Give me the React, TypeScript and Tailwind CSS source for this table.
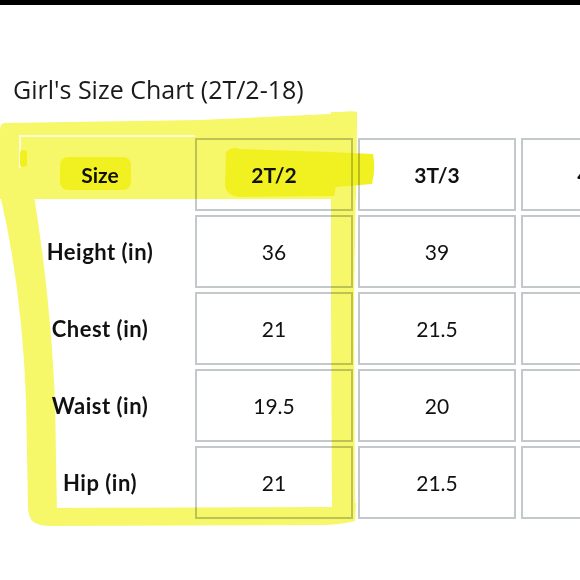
const columns = [
  { size: '2T/2', height: '36', chest: '21', waist: '19.5', hip: '21' },
  { size: '3T/3', height: '39', chest: '21.5', waist: '20', hip: '21.5' },
  { size: '4T/4', height: '41', chest: '22', waist: '20.5', hip: '22.5' },
];

const rows: { label: string; key: 'height' | 'chest' | 'waist' | 'hip' }[] = [
  { label: 'Height (in)', key: 'height' },
  { label: 'Chest (in)', key: 'chest' },
  { label: 'Waist (in)', key: 'waist' },
  { label: 'Hip (in)', key: 'hip' },
];

function Cell({ children, bold }: { children: React.ReactNode; bold?: boolean }) {
  return (
    <div
      className={`h-[73px] border-2 border-[#c3c9cb] flex items-center justify-center text-[21px] text-[#111] ${
        bold ? 'font-bold' : 'font-normal'
      }`}
    >
      {children}
    </div>
  );
}

function Label({ children, wide }: { children: React.ReactNode; wide?: boolean }) {
  return (
    <div
      className={`h-[73px] flex items-center justify-center font-bold text-[#111] ${
        wide ? 'text-[22px] tracking-[0.5px]' : 'text-[21px]'
      }`}
    >
      {children}
    </div>
  );
}

// highlighter marks drawn over the chart
function Highlighter() {
  return (
    <svg
      className="absolute inset-0 pointer-events-none mix-blend-multiply"
      width="580"
      height="580"
      viewBox="0 0 580 580"
    >
      <g fill="#f7f76a">
        <path d="M4,123 L200,120 L330,114 Q350,110 357,112 L356,199 L0,199 L0,130 Q0,124 4,123 Z" />
        <path d="M0,190 L33,190 Q50,290 55,400 L57,515 L40,524 Q28,524 28,505 L26,400 Q22,290 1,199 Z" />
        <path d="M30,508 L340,507 L356,503 L355,521 Q340,525 320,525 L50,526 Q30,526 29,512 Z" />
        <path d="M331,112 L357,112 L354,300 L355,521 L332,516 L331,300 Z" />
      </g>
      <polyline points="20,168 20,136 195,136" fill="none" stroke="#fbfbd8" strokeWidth="2" />
      <g fill="#f1f122">
        <rect x="60" y="157" width="71" height="33" rx="8" />
        <path d="M226,152 Q232,146 240,149 L330,152 L373,154 Q376,168 372,184 L336,187 L334,196 L240,197 Q226,196 225,185 Z" />
        <rect x="20" y="150" width="7" height="17" rx="3" />
      </g>
    </svg>
  );
}

export default function App() {
  return (
    <div
      className="relative w-[580px] h-[580px] overflow-hidden bg-white"
      style={{ fontFamily: 'Lato, "Open Sans", sans-serif' }}
    >
      <div className="h-[5px] bg-black" />
      <h1
        className="mt-[68px] ml-[13px] text-[25px] leading-[32px] font-normal text-[#1a1a1a]"
        style={{ fontFamily: '"Open Sans", "Noto Sans", sans-serif' }}
      >
        Girl's Size Chart (2T/2-18)
      </h1>
      <div className="mt-[33px] ml-[10px] grid grid-cols-[180px_158px_158px_158px] gap-x-[5px] gap-y-[4px] w-max">
        <Label>Size</Label>
        {columns.map((c) => (
          <Cell key={c.size} bold>
            {c.size}
          </Cell>
        ))}
        {rows.map((r) => (
          <>
            <Label key={r.label} wide>
              {r.label}
            </Label>
            {columns.map((c) => (
              <Cell key={r.key + c.size}>{c[r.key]}</Cell>
            ))}
          </>
        ))}
      </div>
      <Highlighter />
    </div>
  );
}
